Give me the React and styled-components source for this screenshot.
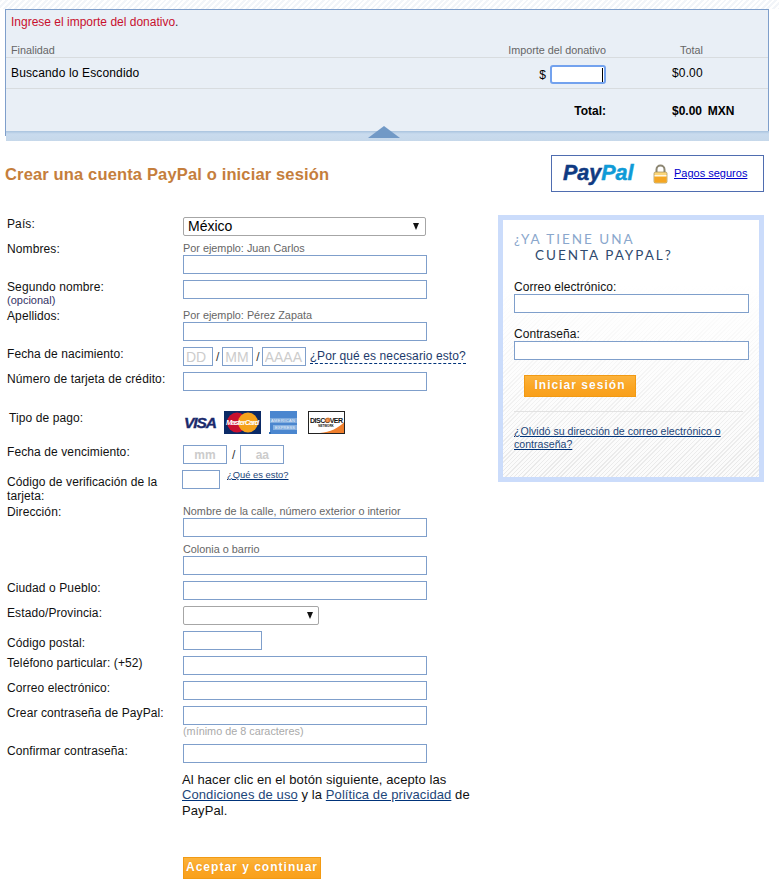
import React from "react";
import styled, { createGlobalStyle } from "styled-components";

const Global = createGlobalStyle`
  html, body { margin: 0; padding: 0; background: #fff; }
  body { font-family: "Liberation Sans", Arial, sans-serif; font-size: 12px; color: #000; }
  #root { width: 779px; height: 888px; overflow: hidden; }
`;

const Page = styled.div`
  padding-top: 9px;
  background: repeating-linear-gradient(135deg, #f2f5f9 0 2px, #fff 2px 4px) top left / 100% 9px no-repeat, #fff;
`;

const Panel = styled.section`
  margin: 0 10px 0 5px;
  border: 1px solid #7f9fcb;
  border-bottom: 0;
  background: #e9eff6;
  position: relative;
  height: 127px;
  box-sizing: border-box;
`;
const ErrorText = styled.div`
  color: #c8102e;
  padding: 5px 0 0 5px;
  height: 33px;
  box-sizing: border-box;
  line-height: 14px;
  span { color: #333; }
`;
const PanelRow = styled.div`
  display: grid;
  grid-template-columns: 1fr 166px 162px;
  height: ${(p) => p.$h}px;
  box-sizing: border-box;
  padding-left: 5px;
  border-bottom: ${(p) => (p.$line ? "1px solid #d8dcdf" : "0")};
  align-items: start;
  color: ${(p) => p.$color || "#000"};
  font-size: ${(p) => p.$size || 12}px;
  font-weight: ${(p) => (p.$bold ? 700 : 400)};
  padding-top: ${(p) => p.$top || 0}px;
  letter-spacing: ${(p) => p.$track || 0}px;
`;
const RightCell = styled.div`
  text-align: right;
  display: flex;
  justify-content: flex-end;
  align-items: ${(p) => p.$align || "center"};
  gap: 4px;
`;
const TotalCell = styled.div`
  padding-left: ${(p) => p.$pad || 66}px;
  white-space: pre;
  word-spacing: ${(p) => p.$words || 0}px;
`;
const AmountInput = styled.div`
  width: 56px;
  height: 19px;
  box-sizing: border-box;
  background: #fff;
  border: 2px solid #73a2ee;
  border-radius: 3px;
  display: flex;
  justify-content: flex-end;
  align-items: center;
  padding-right: 1px;
  margin-top: -1px;
  i { display: block; width: 1px; height: 14px; background: #000; }
`;
const Dollar = styled.span`
  margin-top: 2px;
`;
const Band = styled.div`
  margin: -5px 10px 0 6px;
  height: 10px;
  position: relative;
  background: linear-gradient(#a9c3de, #c9dbee 30%, #c6d8ea);
  box-sizing: border-box;
`;
const Notch = styled.div`
  position: absolute;
  left: 362px;
  top: -5px;
  width: 0;
  height: 0;
  border-left: 16px solid transparent;
  border-right: 16px solid transparent;
  border-bottom: 12px solid #7199c6;
`;

const TitleBar = styled.div`
  display: flex;
  justify-content: space-between;
  align-items: flex-start;
  margin: 14px 15px 0 5px;
  height: 62px;
`;
const Title = styled.h1`
  margin: 9px 0 0;
  font-size: 16.5px;
  line-height: 20px;
  letter-spacing: 0.15px;
  font-weight: 700;
  color: #c57e3c;
`;
const SecureBox = styled.div`
  width: 213px;
  height: 37px;
  box-sizing: border-box;
  border: 1px solid #4f6db0;
  display: flex;
  align-items: center;
  padding-left: 11px;
`;
const Logo = styled.span`
  font-size: 21.5px;
  font-weight: 700;
  font-style: italic;
  color: #0f3a82;
  -webkit-text-stroke: 0.5px #0f3a82;
  width: 90px;
  margin-top: -1px;
  b { color: #0f9bd7; font-weight: 700; -webkit-text-stroke: 0.5px #0f9bd7; }
`;
const SecureLink = styled.a`
  color: #0000cc;
  font-size: 11px;
  text-decoration: underline;
  margin: -1px 0 0 6px;
`;

const Columns = styled.div`
  display: flex;
  align-items: flex-start;
`;
const FormCol = styled.div`
  width: 498px;
  flex: none;
`;
const Row = styled.div`
  display: grid;
  grid-template-columns: 176px 1fr;
  height: ${(p) => p.$h}px;
  padding-left: 7px;
`;
const Label = styled.div`
  padding-top: ${(p) => p.$top || 0}px;
  padding-left: ${(p) => p.$indent || 0}px;
  line-height: 14px;
  letter-spacing: 0.1px;
  color: #111;
`;
const Small = styled.div`
  font-size: 11px;
  line-height: 12px;
  letter-spacing: 0;
  color: #336;
`;
const Hint = styled.div`
  font-size: 10.85px;
  line-height: 13px;
  height: 13px;
  color: ${(p) => p.$color || "#666"};
  white-space: nowrap;
`;
const Field = styled.input`
  display: block;
  width: ${(p) => p.$w || 244}px;
  height: 19px;
  box-sizing: border-box;
  margin: ${(p) => p.$m || 0};
  padding: 0 2px;
  border: 1px solid #7f9fcb;
  background: #fff;
  border-radius: 0;
  outline: none;
  font: ${(p) => (p.$bold ? 700 : 400)} ${(p) => p.$fs || 12}px "Liberation Sans", Arial, sans-serif;
  text-align: ${(p) => p.$align || "left"};
  &::placeholder { color: #ccc; opacity: 1; }
`;
const SelectWrap = styled.div`
  position: relative;
  width: ${(p) => p.$w}px;
  height: 19px;
  &::after {
    content: "";
    position: absolute;
    right: ${(p) => p.$arrow}px;
    top: 6px;
    border-left: 3.5px solid transparent;
    border-right: 3.5px solid transparent;
    border-top: 7px solid #111;
    pointer-events: none;
  }
`;
const Select = styled.select`
  appearance: none;
  display: block;
  width: 100%;
  height: 19px;
  box-sizing: border-box;
  padding: 0 0 2px 4px;
  border: 1px solid #a6a6a6;
  border-radius: 2px;
  background: #fff;
  color: #000;
  font: 14px "Liberation Sans", Arial, sans-serif;
  outline: none;
`;
const Inline = styled.div`
  display: flex;
  align-items: center;
  gap: ${(p) => p.$gap || 3}px;
  height: 19px;
  margin-left: ${(p) => p.$ml || 0}px;
  font-size: 12px;
  color: #333;
`;
const Why = styled.a`
  font-size: 12px;
  color: #1d3a6b;
  border-bottom: 1px dashed #00337a;
  line-height: 13px;
  letter-spacing: 0.1px;
  margin: 1px 0 0 1px;
  white-space: nowrap;
`;
const TextLink = styled.a`
  color: #1d4679;
  text-decoration: underline;
  text-decoration-color: #00337a;
`;
const TinyLink = styled(TextLink)`
  font-size: 9.4px;
  align-self: flex-start;
  margin: -1px 0 0 4px;
  line-height: 11px;
`;
const Cards = styled.div`
  display: flex;
  align-items: center;
  height: 23px;
`;
const CardArt = styled.svg`
  display: block;
  flex: none;
  margin-left: ${(p) => p.$ml || 0}px;
`;
const Legal = styled.p`
  margin: 0 0 0 -1px;
  width: 300px;
  font-size: 13px;
  letter-spacing: 0.09px;
  line-height: 15.25px;
  color: #111;
`;
const Orange = styled.button`
  display: block;
  box-sizing: border-box;
  border: 1px solid #f29a13;
  background: linear-gradient(#fcb33c, #fba623 55%, #f9a01c);
  color: #fff;
  font: 700 12px "Liberation Sans", Arial, sans-serif;
  letter-spacing: 1.02px;
  height: 22px;
  width: ${(p) => p.$w}px;
  padding: 0 0 2px;
  margin: ${(p) => p.$m || 0};
  text-shadow: 0 0 1px rgba(200, 110, 0, 0.5);
`;

const LoginBox = styled.aside`
  width: 266px;
  height: 267px;
  box-sizing: border-box;
  margin-top: -2px;
  border: 5px solid #cbdcfb;
  padding: 11px 11px 0 11px;
  background:
    linear-gradient(rgba(255,255,255,1) 25%, rgba(255,255,255,0) 100%),
    repeating-linear-gradient(135deg, #e9e9e9 0 1px, #fbfbfb 1px 3px);
`;
const LoginTitle = styled.div`
  font-family: Lato, "Liberation Sans", sans-serif;
  font-size: 13.5px;
  line-height: 16px;
  letter-spacing: 2px;
  color: ${(p) => p.$color};
  padding-left: ${(p) => p.$indent || 0}px;
  white-space: nowrap;
`;
const LoginLabel = styled.div`
  line-height: 14px;
  letter-spacing: 0.05px;
  margin-top: ${(p) => p.$top}px;
  color: #111;
`;
const Divider = styled.div`
  height: 1px;
  background: #e2e2e2;
  margin: 14px 5px 0 0;
`;
const ForgotLink = styled(TextLink)`
  display: block;
  font-size: 10.6px;
  line-height: 13px;
  margin-top: 13px;
`;

const Lock = () => (
  <svg width="15" height="20" viewBox="0 0 15 20" aria-hidden="true">
    <path d="M3.5 9V5.5a4 4 0 0 1 8 0V9" fill="none" stroke="#8c8672" strokeWidth="2" />
    <rect x="1" y="8" width="13" height="11" rx="1.5" fill="#fbd67a" stroke="#a08a50" strokeWidth="0.7" />
    <rect x="1.5" y="12.5" width="12" height="6" fill="#f5a623" />
    <rect x="1.5" y="11" width="12" height="1.4" fill="#fff" opacity="0.8" />
  </svg>
);
const Visa = () => (
  <CardArt width="38" height="23" viewBox="0 0 38 23" aria-hidden="true">
    <text x="1" y="17" fontFamily="Liberation Sans" fontSize="15.5" fontWeight="700" fontStyle="italic" fill="#1a2a6c" stroke="#1a2a6c" strokeWidth="0.4" textLength="33">VISA</text>
  </CardArt>
);
const Master = () => (
  <CardArt $ml={3} width="37" height="23" viewBox="0 0 37 23" aria-hidden="true">
    <rect width="37" height="23" fill="#0b2a66" />
    <circle cx="13" cy="11.5" r="10" fill="#c8102e" />
    <circle cx="24" cy="11.5" r="10" fill="#f5a21b" />
    <text x="18.5" y="14" textAnchor="middle" fontFamily="Liberation Sans" fontSize="7.5" fontWeight="700" fontStyle="italic" fill="#fff" textLength="33">MasterCard</text>
  </CardArt>
);
const Amex = () => (
  <CardArt $ml={8} width="28" height="23" viewBox="0 0 28 23" aria-hidden="true">
    <rect x="1" width="27" height="23" fill="#4a86cf" />
    <rect x="1" y="7" width="27" height="5" fill="#7fabdd" />
    <rect x="4" y="14" width="24" height="5" fill="#86b0e0" />
    <text x="14" y="11" textAnchor="middle" fontFamily="Liberation Sans" fontSize="4" fill="#e8f0fa" textLength="24">AMERICAN</text>
    <text x="16" y="18" textAnchor="middle" fontFamily="Liberation Sans" fontSize="4" fill="#e8f0fa" textLength="20">EXPRESS</text>
    <rect y="21" width="2" height="2" fill="#2f6db5" />
  </CardArt>
);
const Discover = () => (
  <CardArt $ml={11} width="37" height="23" viewBox="0 0 37 23" aria-hidden="true">
    <rect x="0.5" y="0.5" width="36" height="22" fill="#fff" stroke="#222" />
    <path d="M36 11V22H12C22 21 31 17 36 11Z" fill="#ef7f2d" />
    <text x="18.5" y="11.5" textAnchor="middle" fontFamily="Liberation Sans" fontSize="7" fontWeight="700" fill="#111" textLength="33">DISCOVER</text>
    <circle cx="20" cy="9" r="2.6" fill="#ef7f2d" opacity="0.8" />
    <text x="18" y="16" textAnchor="middle" fontFamily="Liberation Sans" fontSize="3" fontWeight="700" fill="#111">NETWORK</text>
  </CardArt>
);

export default function App() {
  return (
    <Page>
      <Global />
      <Panel>
        <ErrorText>Ingrese el importe del donativo<span>.</span></ErrorText>
        <PanelRow $h={15} $line $color="#666" $size={10.8} $top={1}>
          <div>Finalidad</div>
          <RightCell>Importe del donativo</RightCell>
          <TotalCell $pad={74}>Total</TotalCell>
        </PanelRow>
        <PanelRow $h={31} $line $top={8} $track={0.14}>
          <div>Buscando lo Escondido</div>
          <RightCell $align="flex-start">
            <Dollar>$</Dollar>
            <AmountInput><i /></AmountInput>
          </RightCell>
          <TotalCell>$0.00</TotalCell>
        </PanelRow>
        <PanelRow $h={30} $top={15} $bold>
          <div />
          <RightCell>Total:</RightCell>
          <TotalCell $words={-0.5}>$0.00  MXN</TotalCell>
        </PanelRow>
      </Panel>
      <Band><Notch /></Band>

      <TitleBar>
        <Title>Crear una cuenta PayPal o iniciar sesión</Title>
        <SecureBox>
          <Logo>Pay<b>Pal</b></Logo>
          <Lock />
          <SecureLink>Pagos seguros</SecureLink>
        </SecureBox>
      </TitleBar>

      <Columns>
        <FormCol>
          <Row $h={25}>
            <Label>País:</Label>
            <SelectWrap $w={243} $arrow={7}>
              <Select defaultValue="mx"><option value="mx">México</option></Select>
            </SelectWrap>
          </Row>
          <Row $h={38}>
            <Label>Nombres:</Label>
            <div><Hint>Por ejemplo: Juan Carlos</Hint><Field /></div>
          </Row>
          <Row $h={29}>
            <Label>Segundo nombre:<Small>(opcional)</Small></Label>
            <Field />
          </Row>
          <Row $h={38}>
            <Label>Apellidos:</Label>
            <div><Hint>Por ejemplo: Pérez Zapata</Hint><Field /></div>
          </Row>
          <Row $h={25}>
            <Label>Fecha de nacimiento:</Label>
            <Inline>
              <Field $w={30} $fs={14} placeholder="DD" />
              /
              <Field $w={31} $fs={14} placeholder="MM" />
              /
              <Field $w={44} $fs={14} $m="0 0 0 -1px" placeholder="AAAA" />
              <Why>¿Por qué es necesario esto?</Why>
            </Inline>
          </Row>
          <Row $h={39}>
            <Label>Número de tarjeta de crédito:</Label>
            <Field />
          </Row>
          <Row $h={34}>
            <Label $indent={2}>Tipo de pago:</Label>
            <Cards><Visa /><Master /><Amex /><Discover /></Cards>
          </Row>
          <Row $h={25}>
            <Label>Fecha de vencimiento:</Label>
            <Inline $gap={5}>
              <Field $w={44} $fs={12} $bold $align="center" placeholder="mm" />
              /
              <Field $w={44} $fs={12} $bold $align="center" placeholder="aa" />
            </Inline>
          </Row>
          <Row $h={35}>
            <Label $top={5}>Código de verificación de la tarjeta:</Label>
            <Inline $gap={0} $ml={-1}>
              <Field $w={38} />
              <TinyLink>¿Qué es esto?</TinyLink>
            </Inline>
          </Row>
          <Row $h={38}>
            <Label>Dirección:</Label>
            <div><Hint>Nombre de la calle, número exterior o interior</Hint><Field /></div>
          </Row>
          <Row $h={38}>
            <Label />
            <div><Hint>Colonia o barrio</Hint><Field /></div>
          </Row>
          <Row $h={25}>
            <Label>Ciudad o Pueblo:</Label>
            <Field />
          </Row>
          <Row $h={25}>
            <Label>Estado/Provincia:</Label>
            <SelectWrap $w={136} $arrow={6}><Select /></SelectWrap>
          </Row>
          <Row $h={25}>
            <Label $top={5}>Código postal:</Label>
            <Field $w={79} />
          </Row>
          <Row $h={25}>
            <Label>Teléfono particular: (+52)</Label>
            <Field />
          </Row>
          <Row $h={25}>
            <Label>Correo electrónico:</Label>
            <Field />
          </Row>
          <Row $h={38}>
            <Label>Crear contraseña de PayPal:</Label>
            <div><Field /><Hint $color="#aaa">(mínimo de 8 caracteres)</Hint></div>
          </Row>
          <Row $h={28}>
            <Label>Confirmar contraseña:</Label>
            <Field />
          </Row>
          <Row $h={85}>
            <Label />
            <Legal>
              Al hacer clic en el botón siguiente, acepto las <TextLink>Condiciones de uso</TextLink> y la <TextLink>Política de privacidad</TextLink> de PayPal.
            </Legal>
          </Row>
          <Row $h={22}>
            <Label />
            <Orange type="button" $w={138}>Aceptar y continuar</Orange>
          </Row>
        </FormCol>
        <LoginBox>
          <LoginTitle $color="#8aa7cc">¿YA TIENE UNA</LoginTitle>
          <LoginTitle $color="#2f4a6e" $indent={21}>CUENTA PAYPAL?</LoginTitle>
          <LoginLabel $top={17}>Correo electrónico:</LoginLabel>
          <Field $w={235} />
          <LoginLabel $top={14}>Contraseña:</LoginLabel>
          <Field $w={235} />
          <Orange type="button" $w={112} $m="15px 0 0 10px">Iniciar sesión</Orange>
          <Divider />
          <ForgotLink>¿Olvidó su dirección de correo electrónico o contraseña?</ForgotLink>
        </LoginBox>
      </Columns>
    </Page>
  );
}
